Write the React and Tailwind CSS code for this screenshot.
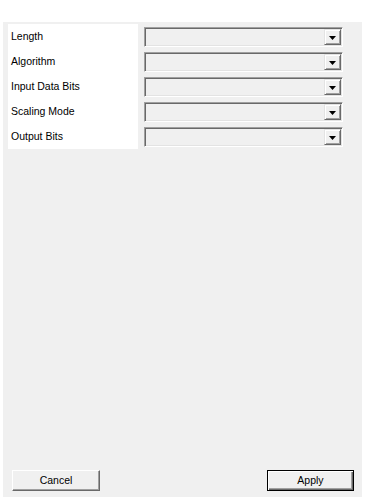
const fields = ['Length', 'Algorithm', 'Input Data Bits', 'Scaling Mode', 'Output Bits'];

const ComboBox = () => (
  <div className="flex h-[20px] w-[199px] justify-end border border-t-[#a0a0a0] border-l-[#a0a0a0] border-b-white border-r-white bg-[#f0f0f0] p-px shadow-[inset_1px_1px_0_#696969,inset_-1px_-1px_0_#e3e3e3]">
    <div className="flex w-[17px] items-center justify-center border border-t-[#e3e3e3] border-l-[#e3e3e3] border-b-[#696969] border-r-[#696969] bg-[#f0f0f0] shadow-[inset_1px_1px_0_#fff,inset_-1px_-1px_0_#a0a0a0]">
      <svg width="7" height="4" viewBox="0 0 7 4" className="mt-px">
        <path d="M0 0h7L3.5 4z" fill="#000" />
      </svg>
    </div>
  </div>
);

const Button = ({ label, isDefault }) => (
  <button
    className={`flex h-[21px] items-center justify-center bg-[#f0f0f0] text-[10.5px] text-black ${
      isDefault
        ? 'w-[87px] border border-black shadow-[inset_1px_1px_0_#fff,inset_-1px_-1px_0_#696969,inset_-2px_-2px_0_#a0a0a0]'
        : 'w-[88px] border border-t-white border-l-white border-b-[#696969] border-r-[#696969] shadow-[inset_-1px_-1px_0_#a0a0a0]'
    }`}
  >
    {label}
  </button>
);

export default function App() {
  return (
    <div className="h-[501px] w-[368px] bg-white pl-[3px] pt-[22px]" style={{ fontFamily: '"Liberation Sans", Arial, sans-serif' }}>
      <div className="flex h-[475px] w-[359px] flex-col bg-[#f0f0f0]">
        <div className="flex pl-[5px] pt-[2px]">
          <div className="w-[130px] bg-white">
            {fields.map((f) => (
              <div key={f} className="flex h-[25px] items-center pl-[3px] pt-px text-[10.5px] text-black">
                {f}
              </div>
            ))}
          </div>
          <div className="ml-[6px] mt-[3px] flex flex-col gap-[5px]">
            {fields.map((f) => (
              <ComboBox key={f} />
            ))}
          </div>
        </div>
        <div className="mt-auto flex justify-between pb-[6px] pl-[9px] pr-[8px]">
          <Button label="Cancel" />
          <Button label="Apply" isDefault />
        </div>
      </div>
    </div>
  );
}
